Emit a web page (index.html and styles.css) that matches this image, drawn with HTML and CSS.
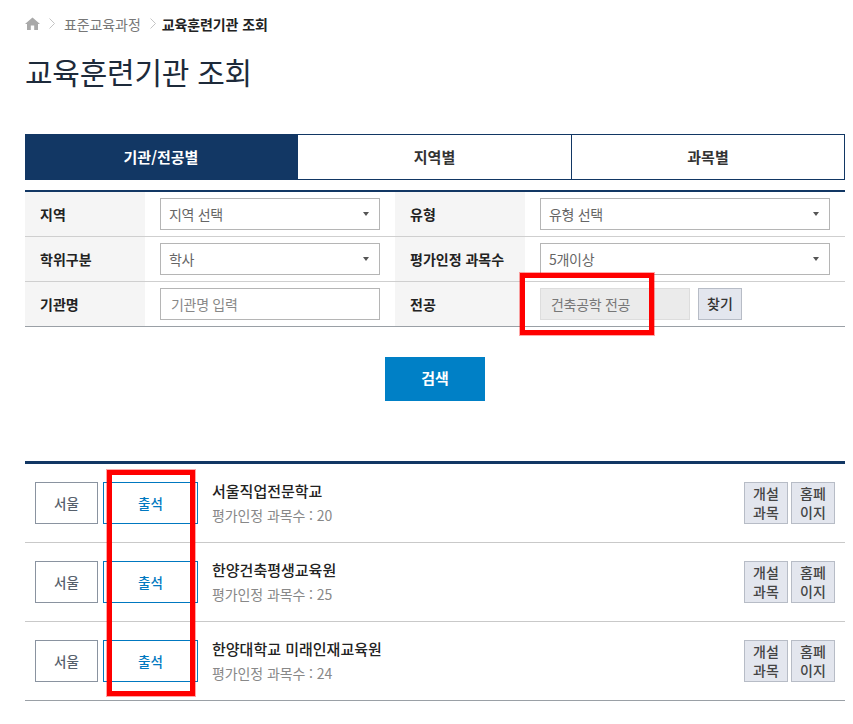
FILE: index.html
```html
<!DOCTYPE html>
<html lang="ko">
<head>
<meta charset="utf-8">
<title>교육훈련기관 조회</title>
<link rel="stylesheet" href="styles.css">
</head>
<body>
<div class="page">
  <nav class="crumbs">
    <svg class="home" width="15" height="13" viewBox="0 0 15 13"><path d="M7.5 0.5 L15 7 H13 V13 H9.2 V8.6 H5.8 V13 H2 V7 H0 Z" fill="#a9a9a9"/></svg>
    <svg class="chev" width="6" height="11" viewBox="0 0 6 11"><path d="M0.5 0.5 L5.5 5.5 L0.5 10.5" fill="none" stroke="#c4c4c4"/></svg>
    <span class="crumb">표준교육과정</span>
    <svg class="chev" width="6" height="11" viewBox="0 0 6 11"><path d="M0.5 0.5 L5.5 5.5 L0.5 10.5" fill="none" stroke="#c4c4c4"/></svg>
    <strong class="crumb-now">교육훈련기관 조회</strong>
  </nav>
  <h1 class="title">교육훈련기관 조회</h1>
  <div class="tabs">
    <div class="tab active">기관/전공별</div>
    <div class="tab">지역별</div>
    <div class="tab">과목별</div>
  </div>
  <div class="form">
    <div class="label">지역</div>
    <div class="cell"><div class="select"><span>지역 선택</span><i class="caret"></i></div></div>
    <div class="label">유형</div>
    <div class="cell"><div class="select"><span>유형 선택</span><i class="caret"></i></div></div>
    <div class="label">학위구분</div>
    <div class="cell"><div class="select"><span>학사</span><i class="caret"></i></div></div>
    <div class="label">평가인정 과목수</div>
    <div class="cell"><div class="select"><span>5개이상</span><i class="caret"></i></div></div>
    <div class="label last">기관명</div>
    <div class="cell last"><div class="input placeholder">기관명 입력</div></div>
    <div class="label last">전공</div>
    <div class="cell last"><div class="input disabled">건축공학 전공</div><div class="find">찾기</div></div>
  </div>
  <div class="actions"><div class="search">검색</div></div>
  <ul class="list">
    <li class="row">
      <div class="tag">서울</div>
      <div class="tag blue">출석</div>
      <div class="info"><div class="name">서울직업전문학교</div><div class="count">평가인정 과목수 : 20</div></div>
      <div class="minis"><div class="mini">개설<br>과목</div><div class="mini">홈페<br>이지</div></div>
    </li>
    <li class="row">
      <div class="tag">서울</div>
      <div class="tag blue">출석</div>
      <div class="info"><div class="name">한양건축평생교육원</div><div class="count">평가인정 과목수 : 25</div></div>
      <div class="minis"><div class="mini">개설<br>과목</div><div class="mini">홈페<br>이지</div></div>
    </li>
    <li class="row">
      <div class="tag">서울</div>
      <div class="tag blue">출석</div>
      <div class="info"><div class="name">한양대학교 미래인재교육원</div><div class="count">평가인정 과목수 : 24</div></div>
      <div class="minis"><div class="mini">개설<br>과목</div><div class="mini">홈페<br>이지</div></div>
    </li>
  </ul>
  <div class="mark mark-major"></div>
  <div class="mark mark-attend"></div>
</div>
</body>
</html>
```
FILE: styles.css
```css
* { box-sizing: border-box; }
html, body { margin: 0; padding: 0; background: #fff; }
body { font-family: "Noto Sans CJK KR", "Noto Sans", sans-serif; color: #222; overflow: hidden; }
.page { position: relative; width: 853px; height: 724px; padding: 0 8px 0 25px; overflow: hidden; }

.crumbs { height: 50px; display: flex; align-items: center; font-size: 14px; padding-bottom: 3px; }
.home { margin-right: 9px; }
.chev { margin-right: 9px; }
.crumb { color: #777; margin-right: 9px; letter-spacing: -0.1px; }
.crumb-now { color: #222; font-weight: 700; letter-spacing: -0.1px; margin-left: -3px; }

.title { margin: 0; height: 84px; font-size: 30px; font-weight: 400; line-height: 42px; letter-spacing: -0.25px; color: #1d2a3a; }

.tabs { display: grid; grid-template-columns: 273px 274px 273px; height: 46px; }
.tab { display: flex; align-items: center; justify-content: center; font-size: 15px; font-weight: 700; color: #333; border: 1px solid #123764; border-left: 0; padding-bottom: 1px; }
.tab.active { background: #123764; color: #fff; }

.form { margin-top: 10px; border-top: 2px solid #123764; display: grid; grid-template-columns: 120px 250px 130px 320px; grid-auto-rows: 45px; font-size: 14px; }
.label { display: flex; align-items: center; padding-left: 15px; background: #f5f5f5; font-weight: 700; color: #222; border-bottom: 1px solid #cfcfcf; }
.cell { display: flex; align-items: flex-start; padding: 6px 15px 0; gap: 8px; border-bottom: 1px solid #cfcfcf; }
.label.last, .cell.last { border-bottom-color: #9aa0a6; }
.select, .input { height: 32px; border: 1px solid #b5b5b5; display: flex; align-items: center; font-size: 14px; letter-spacing: -0.3px; color: #666; background: #fff; width: 100%; padding: 0 8px 1px; }
.select { justify-content: space-between; padding-right: 10px; }
.caret { width: 0; height: 0; border-left: 3.5px solid transparent; border-right: 3.5px solid transparent; border-top: 4px solid #555; }
.input.placeholder { color: #888; padding-left: 10px; }
.input.disabled { width: 150px; flex: none; background: #ebebeb; border-color: #ddd; padding-left: 10px; color: #777; }
.find { width: 44px; height: 32px; flex: none; display: flex; align-items: center; justify-content: center; background: #e3e6ee; border: 1px solid #b7bcc6; font-size: 14px; font-weight: 500; color: #333; padding-bottom: 3px; }

.actions { display: flex; justify-content: center; margin-top: 30px; }
.search { width: 100px; height: 44px; background: #0080c6; color: #fff; font-size: 15px; font-weight: 700; display: flex; align-items: center; justify-content: center; padding-bottom: 3px; }

.list { list-style: none; margin: 60px 0 0; padding: 0; border-top: 3px solid #123764; }
.row { height: 79px; display: flex; align-items: flex-start; padding: 18px 10px 0; border-bottom: 1px solid #c9c9c9; }
.row:last-child { border-bottom-color: #9aa0a6; }
.tag { width: 63px; height: 42px; flex: none; border: 1px solid #8a93a0; display: flex; align-items: center; justify-content: center; font-size: 13.5px; font-weight: 500; color: #56606c; }
.tag.blue { width: 95px; margin-left: 5px; border-color: #0078c0; color: #0078c0; }
.info { flex: 1; padding-left: 14px; margin-top: -3px; }
.name { font-size: 15px; font-weight: 500; line-height: 24px; color: #222; }
.count { font-size: 14px; line-height: 24px; letter-spacing: -0.1px; color: #888; }
.minis { display: flex; gap: 3px; }
.mini { width: 44px; height: 42px; border: 1px solid #b7bcc6; background: #e3e6ee; font-size: 14px; font-weight: 500; line-height: 19px; color: #444; text-align: center; padding-top: 1px; }

.mark { position: absolute; border: 5px solid #f00; box-shadow: 0 0 0 1px rgba(255, 0, 0, 0.35); }
.mark-major { left: 520px; top: 273px; width: 134px; height: 62px; }
.mark-attend { left: 107px; top: 470px; width: 88px; height: 226px; }
```
